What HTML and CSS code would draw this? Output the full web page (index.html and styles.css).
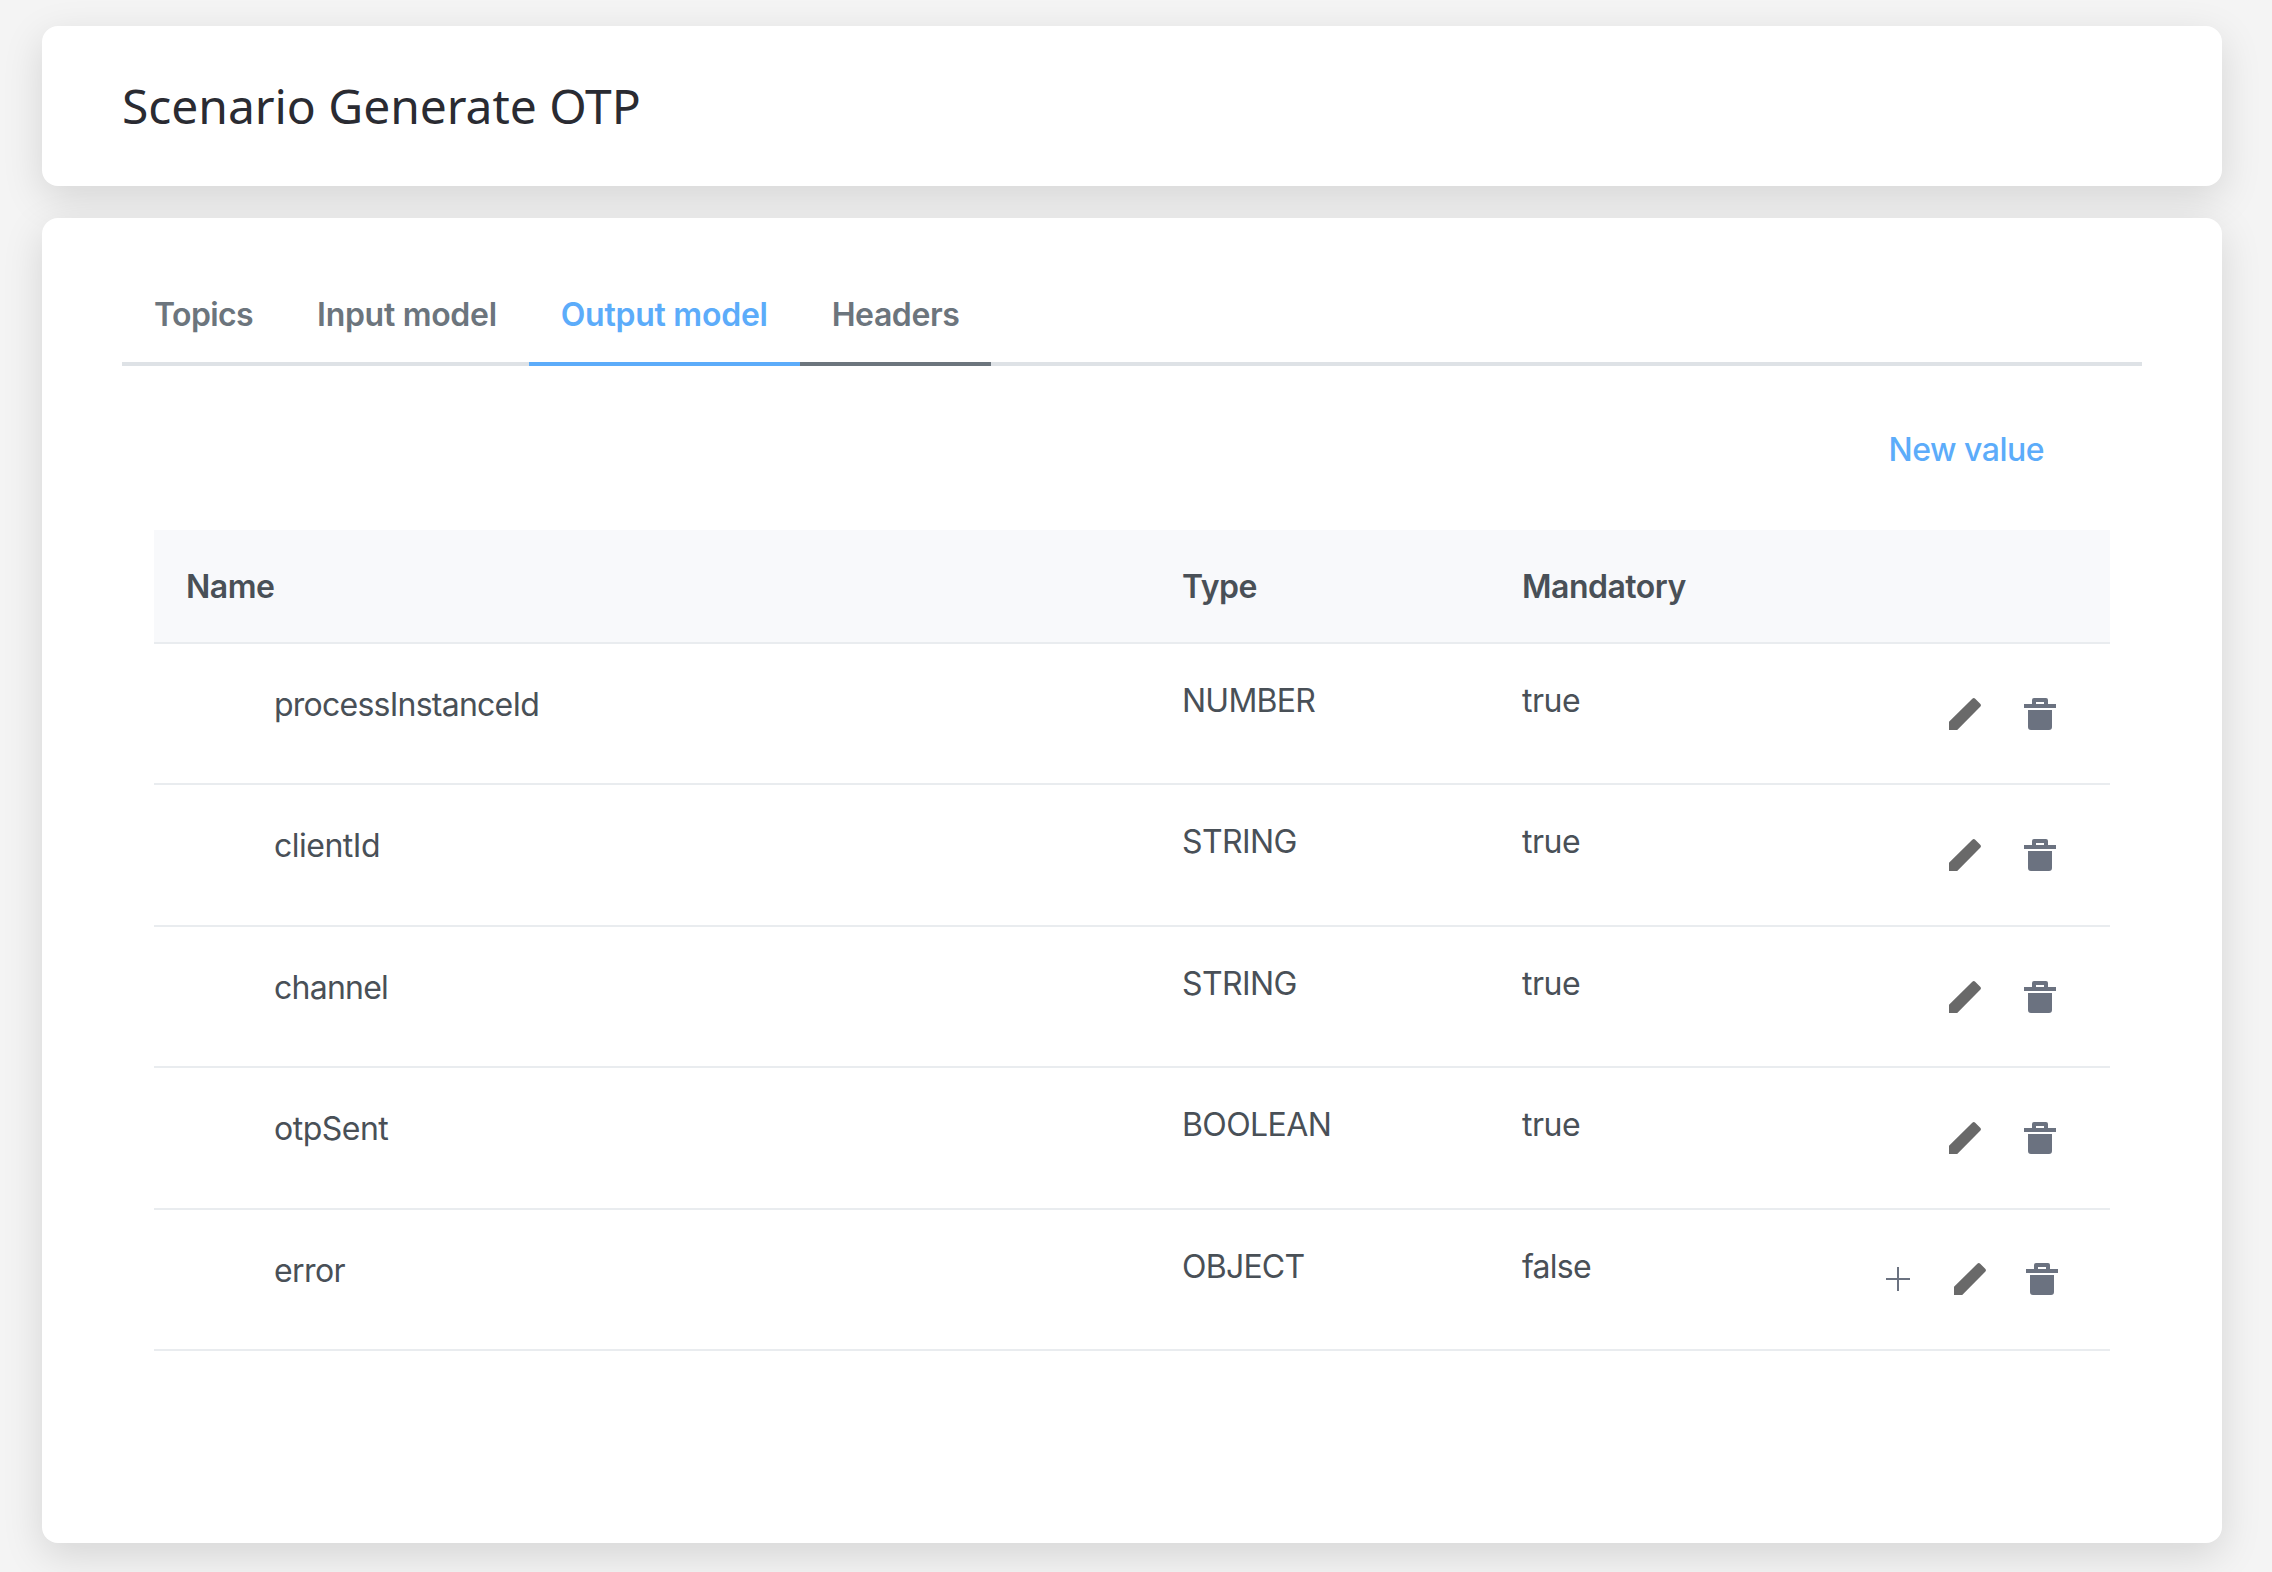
FILE: index.html
```html
<!DOCTYPE html>
<html lang="en">
<head>
<meta charset="utf-8">
<title>Scenario Generate OTP</title>
<link rel="stylesheet" href="styles.css">
</head>
<body>
<svg class="sprite" aria-hidden="true">
  <symbol id="pencil" viewBox="0 0 32 32"><path d="M0 32V23.8L23.3.8Q24.8-.6 26.2.8L31.2 5.8Q32.7 7.2 31.2 8.7L8.2 32Z"/></symbol>
  <symbol id="trash" viewBox="0 0 32 32"><path fill-rule="evenodd" d="M8 6V2Q8 0 10 0H22Q24 0 24 2V6H32V10H0V6ZM12 4V6H20V4ZM4 12H28V29Q28 32 25 32H7Q4 32 4 29Z"/></symbol>
  <symbol id="plus" viewBox="0 0 24 24"><path d="M11 0H13V11H24V13H13V24H11V13H0V11H11Z"/></symbol>
</svg>
<main class="page">
  <header class="card title-card"><h1 class="title">Scenario Generate OTP</h1></header>
  <section class="card content-card">
    <nav class="tabs">
      <a class="tab tight">Topics</a>
      <a class="tab">Input model</a>
      <a class="tab tab-active">Output model</a>
      <a class="tab tab-focus">Headers</a>
    </nav>
    <div class="toolbar"><button class="new-value">New value</button></div>
    <div class="table">
      <div class="row head"><span>Name</span><span>Type</span><span>Mandatory</span></div>
      <div class="row"><span class="name tighter">processInstanceId</span><span class="tighter">NUMBER</span><span>true</span><span class="actions"><svg class="icon edit"><use href="#pencil"/></svg><svg class="icon"><use href="#trash"/></svg></span></div>
      <div class="row"><span class="name">clientId</span><span class="tight">STRING</span><span>true</span><span class="actions"><svg class="icon edit"><use href="#pencil"/></svg><svg class="icon"><use href="#trash"/></svg></span></div>
      <div class="row"><span class="name tighter">channel</span><span class="tight">STRING</span><span>true</span><span class="actions"><svg class="icon edit"><use href="#pencil"/></svg><svg class="icon"><use href="#trash"/></svg></span></div>
      <div class="row"><span class="name">otpSent</span><span class="tight">BOOLEAN</span><span>true</span><span class="actions"><svg class="icon edit"><use href="#pencil"/></svg><svg class="icon"><use href="#trash"/></svg></span></div>
      <div class="row"><span class="name tight">error</span><span class="tighter">OBJECT</span><span class="tighter">false</span><span class="actions actions-object"><svg class="icon add"><use href="#plus"/></svg><svg class="icon edit"><use href="#pencil"/></svg><svg class="icon"><use href="#trash"/></svg></span></div>
    </div>
  </section>
</main>
</body>
</html>
```
FILE: styles.css
```css
* { box-sizing: border-box; }
body {
  margin: 0;
  background: #f4f4f4;
  color: #495057;
  font: 400 32px/48px Inter, "Liberation Sans", sans-serif;
  letter-spacing: -.5px;
}
.sprite { display: none; }
.page {
  display: flex;
  flex-direction: column;
  gap: 32px;
  height: 1572px;
  padding: 26px 50px 29px 42px;
  overflow: hidden;
}
.card {
  background: #fff;
  border-radius: 16px;
  box-shadow: 0 12px 40px rgba(0, 0, 0, .13);
}
.title-card { height: 160px; padding: 48px 80px; }
.title {
  margin: 0;
  color: #2a2b32;
  font: 400 48px/64px "Noto Sans", "Open Sans", sans-serif;
  letter-spacing: -.06px;
}
.content-card { flex: 1; padding: 48px 80px; }
.tabs {
  display: flex;
  height: 100px;
  box-shadow: inset 0 -4px #dee2e6;
}
.tab {
  padding: 25px 32px 0;
  border-bottom: 4px solid transparent;
  color: #6c757d;
  font-weight: 600;
  letter-spacing: -.3px;
}
.tab-active { color: #5cacfa; border-color: #5cacfa; letter-spacing: -.25px; }
.tab-focus { border-color: #6c757d; letter-spacing: -.43px; }
.tight { letter-spacing: -.6px; }
.tighter { letter-spacing: -.76px; }
.toolbar {
  display: flex;
  justify-content: flex-end;
  height: 164px;
  padding: 60px 98px 0 0;
}
.new-value {
  height: 48px;
  padding: 0;
  border: 0;
  background: none;
  color: #5cacfa;
  font: inherit;
  font-weight: 500;
  letter-spacing: -.5px;
}
.table { margin: 0 32px; }
.row {
  display: grid;
  grid-template-columns: 996px 340px 300px 1fr;
  height: 141.4px;
  padding: 33px 0 0 32px;
  border-bottom: 2px solid #e9ecef;
}
.head {
  height: 114px;
  background: #f8f9fb;
  font-weight: 600;
}
.name { padding: 4px 0 0 88px; }
.actions {
  display: flex;
  justify-content: flex-end;
  align-items: center;
  gap: 43px;
  height: 32px;
  margin-top: 21px;
  padding-right: 54px;
}
.actions-object { gap: 40px; margin-top: 20px; padding-right: 52px; }
.icon { width: 32px; height: 32px; fill: #6b7280; }
.edit { fill: #696969; }
.add { width: 24px; height: 24px; margin-right: 4px; }
```
